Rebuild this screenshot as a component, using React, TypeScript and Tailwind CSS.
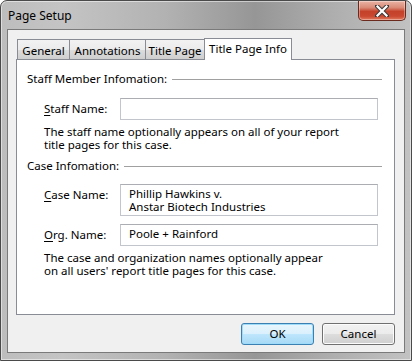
const font = "font-['Segoe_UI','Noto_Sans','Liberation_Sans',sans-serif]"

function CloseButton() {
  return (
    <div className="w-[48px] h-[20px] rounded-b-[5px] border border-t-0 border-[#6b2a1e] bg-[linear-gradient(180deg,#eab4a6_0%,#d98a76_35%,#c4412a_55%,#c9482f_80%,#e07a60_100%)] flex items-center justify-center shadow-[inset_0_0_0_1px_rgba(255,255,255,0.35)]">
      <svg width="14" height="12" viewBox="0 0 14 12">
        <path d="M2 1 L12 11 M12 1 L2 11" stroke="#3a3a3a" strokeWidth="4.2" strokeLinecap="square" />
        <path d="M2.5 1.5 L11.5 10.5 M11.5 1.5 L2.5 10.5" stroke="#ffffff" strokeWidth="2.2" strokeLinecap="square" />
      </svg>
    </div>
  )
}

function Tab({ label, active, width }: { label: string; active?: boolean; width: string }) {
  if (active) {
    return (
      <div className={`${width} h-[22px] -mb-px relative z-10 bg-white border border-b-0 border-[#898c95] flex items-center justify-center text-[11.5px] text-black pb-[1px]`}>
        {label}
      </div>
    )
  }
  return (
    <div className={`${width} h-[20px] mt-[2px] bg-[linear-gradient(180deg,#f2f2f2_0%,#ebebeb_50%,#dddddd_51%,#cfcfcf_100%)] border border-b-0 border-[#898c95] -mr-px flex items-center justify-center text-[11.5px] text-black pt-[2px]`}>
      {label}
    </div>
  )
}

function Section({ title }: { title: string }) {
  return (
    <div className="flex items-center gap-[5px] h-[18px]">
      <span className="text-[11.5px] text-black whitespace-nowrap">{title}</span>
      <div className="flex-1 h-px bg-[#a0a0a0]" />
    </div>
  )
}

function Field({ label, u, value, h = "h-[22px]" }: { label: string; u: string; value?: string[]; h?: string }) {
  return (
    <div className="flex items-start pl-[17px]">
      <div className="w-[76px] text-[11.5px] text-black pt-[3px] leading-[15px]">
        <span className="underline underline-offset-2">{u}</span>
        {label}
      </div>
      <div className={`w-[258px] ${h} border border-[#c2c6cc] border-t-[#abadb3] bg-white px-[8px] pt-[2px] text-[11.5px] leading-[13px] text-black`}>
        {value?.map((v, i) => (
          <div key={i}>{v}</div>
        ))}
      </div>
    </div>
  )
}

function Button({ label, primary }: { label: string; primary?: boolean }) {
  return (
    <div
      className={
        primary
          ? "w-[73px] h-[22px] rounded-[3px] border border-[#3c7fb1] bg-[linear-gradient(180deg,#eaf6fd_0%,#d9f0fc_50%,#bee6fd_51%,#a7d9f5_100%)] shadow-[inset_0_0_0_1px_#9fdcfa] flex items-center justify-center text-[11.5px] text-black"
          : "w-[73px] h-[22px] rounded-[3px] border border-[#707070] bg-[linear-gradient(180deg,#f2f2f2_0%,#ebebeb_50%,#dddddd_51%,#cfcfcf_100%)] shadow-[inset_0_0_0_1px_#fcfcfc] flex items-center justify-center text-[11.5px] text-black"
      }
    >
      {label}
    </div>
  )
}

export default function App() {
  return (
    <div className={`w-[412px] h-[361px] bg-white ${font}`}>
      <div className="w-[412px] h-[361px] flex flex-col rounded-t-[7px] border border-[#4a4a4a] bg-[linear-gradient(90deg,#bdbdbd_0%,#c4c4c4_15%,#b2b2b2_40%,#969696_62%,#adadad_80%,#c2c2c2_100%)] shadow-[inset_0_0_0_1px_rgba(255,255,255,0.5)]">
        {/* title bar */}
        <div className="h-[28px] flex items-start justify-between pl-[7px] pr-[5px]">
          <span className="text-[12px] text-black pt-[6px]">Page Setup</span>
          <CloseButton />
        </div>

        {/* client */}
        <div className="mx-[6px] mb-[7px] flex-1 border border-[#7a7a7a] bg-[#f0f0f0] flex flex-col pt-[7px] pl-[8px] pr-[9px]">
          <div className="flex items-end pl-[1px]">
            <Tab label="General" width="w-[53px]" />
            <Tab label="Annotations" width="w-[77px]" />
            <Tab label="Title Page" width="w-[60px]" />
            <Tab label="Title Page Info" width="w-[88px]" active />
          </div>
          <div className="h-[256px] bg-white border border-[#898c95] pt-[10px] pl-[10px] pr-[12px] flex flex-col">
            <Section title="Staff Member Infomation:" />
            <div className="mt-[10px]">
              <Field u="S" label="taff Name:" />
            </div>
            <p className="pl-[17px] mt-[5px] text-[11.5px] leading-[13px] text-black">
              The staff name optionally appears on all of your report
              <br />
              title pages for this case.
            </p>
            <div className="mt-[6px]">
              <Section title="Case Infomation:" />
            </div>
            <div className="mt-[9px]">
              <Field u="C" label="ase Name:" value={["Phillip Hawkins v.", "Anstar Biotech Industries"]} h="h-[32px]" />
            </div>
            <div className="mt-[8px]">
              <Field u="O" label="rg. Name:" value={["Poole + Rainford"]} />
            </div>
            <p className="pl-[17px] mt-[5px] text-[11.5px] leading-[13px] text-black">
              The case and organization names optionally appear
              <br />
              on all users&apos; report title pages for this case.
            </p>
          </div>
          <div className="flex justify-end gap-[8px] mt-[8px]">
            <Button label="OK" primary />
            <Button label="Cancel" />
          </div>
        </div>
      </div>
    </div>
  )
}
